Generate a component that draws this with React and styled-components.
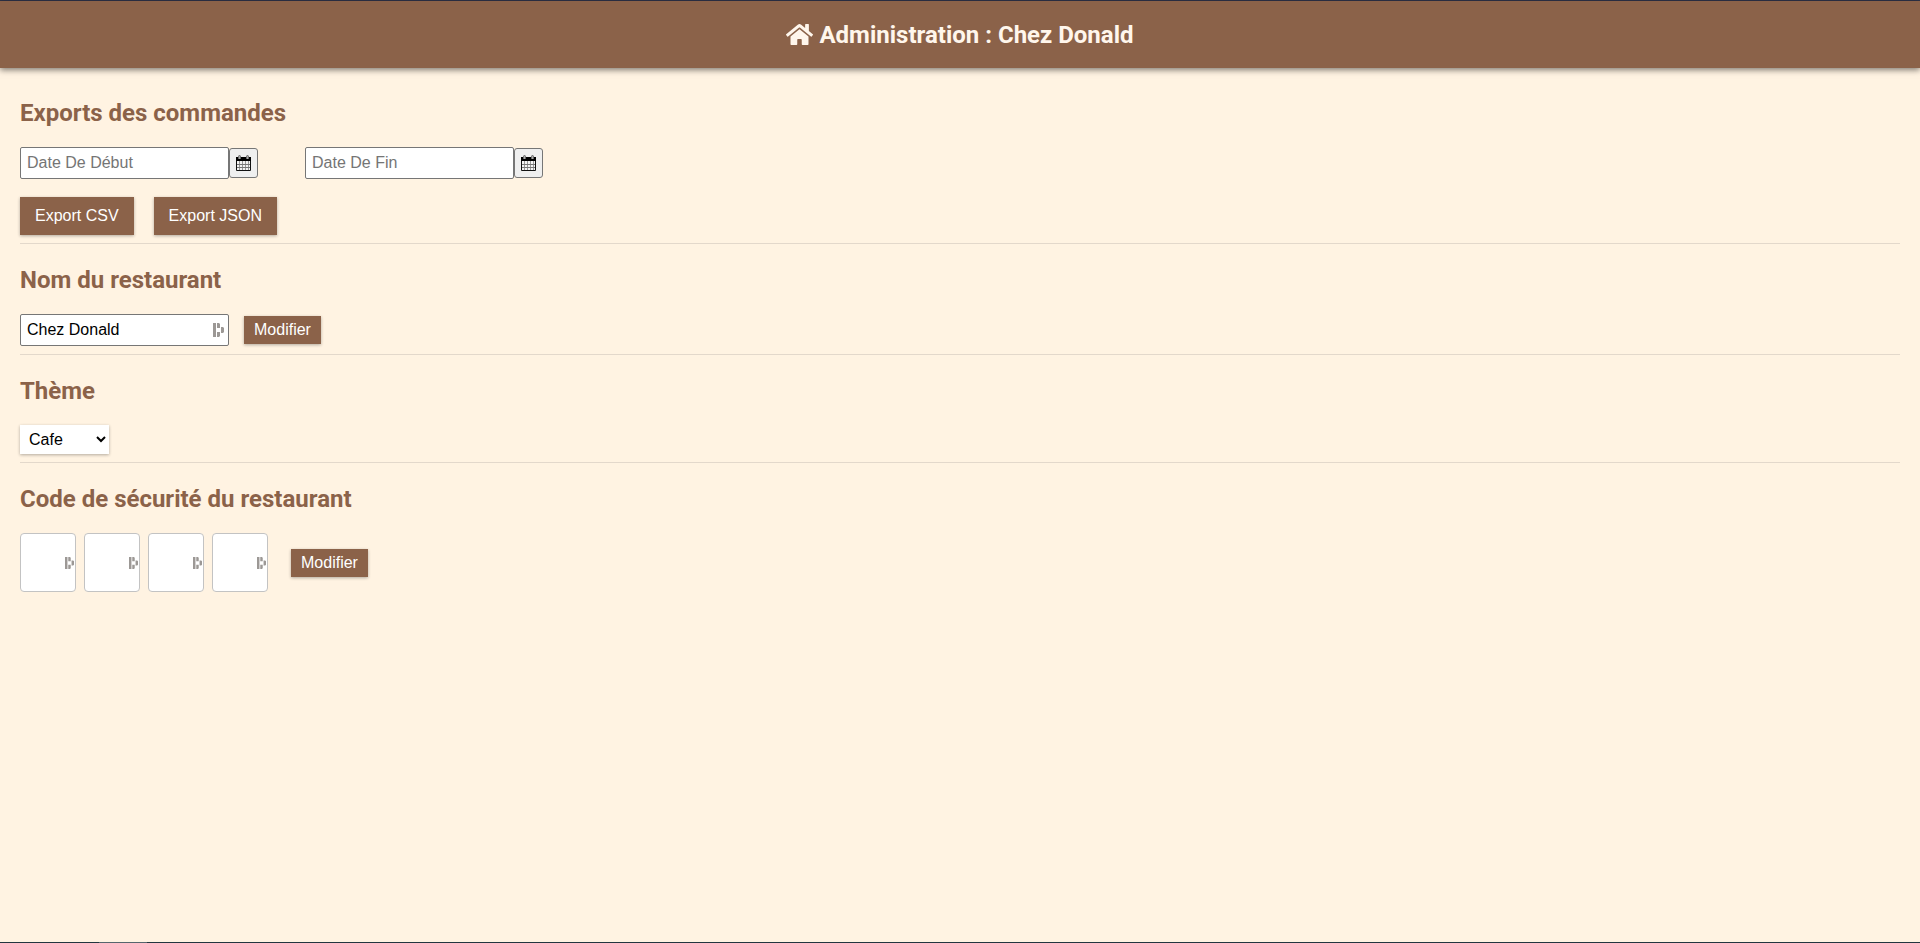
import React from "react";
import styled, { createGlobalStyle } from "styled-components";
import { FaHome } from "react-icons/fa";

const brown = "#8b6249";
const cream = "#fff3e2";

const GlobalStyle = createGlobalStyle`
  *, *::before, *::after { box-sizing: border-box; }
  body { margin: 0; background: ${cream}; }
  button, input, select { font: 16px "Liberation Sans", Arial, sans-serif; margin: 0; }
`;

const Page = styled.div`
  min-height: 100vh;
  display: flex;
  flex-direction: column;
  border-top: 1px solid #2e3248;
  font-family: Roboto, sans-serif;
`;

const Header = styled.header`
  display: flex;
  align-items: center;
  justify-content: center;
  gap: 6px;
  height: 67px;
  background: ${brown};
  color: #fff6ec;
  box-shadow: 0 2px 6px rgba(0, 0, 0, 0.5);
`;

const HomeLink = styled.a`
  display: flex;
  color: inherit;
`;

const Title = styled.h1`
  margin: 0;
  font-size: 24px;
  line-height: 28px;
  font-weight: 700;
`;

const Main = styled.main`
  flex: 1;
  padding: 9px 20px;
`;

const Section = styled.section`
  padding: 22px 0 8px;
  border-bottom: ${(p) => (p.$last ? "none" : "1px solid #e3d8cb")};
`;

const Heading = styled.h2`
  margin: 0 0 20px;
  color: ${brown};
  font-size: 24px;
  line-height: 28px;
  font-weight: 700;
`;

const Row = styled.div`
  display: flex;
  align-items: center;
  gap: ${(p) => p.$gap}px;
  margin-top: ${(p) => p.$top || 0}px;
`;

const TextInput = styled.input`
  width: 209px;
  height: 32px;
  padding: 0 6px;
  border: 1px solid #767676;
  border-radius: 2px;
  background: #fff;
  color: #000;
  &::placeholder { color: #757575; }
`;

const CalendarButton = styled.button`
  display: flex;
  align-items: center;
  justify-content: center;
  width: 29px;
  height: 30px;
  padding: 0;
  border: 1px solid #767676;
  border-radius: 3px;
  background: #efefef;
`;

const Button = styled.button`
  height: ${(p) => (p.$large ? 38 : 28)}px;
  padding: 0 ${(p) => (p.$large ? 15 : 10)}px;
  border: 0;
  background: ${brown};
  color: #fff;
  box-shadow: 0 1px 3px rgba(0, 0, 0, 0.3);
`;

const ThemeSelect = styled.select`
  width: 89px;
  height: 29px;
  padding: 0 5px;
  border: 0;
  background: #fff;
  color: #000;
  box-shadow: 0 1px 3px rgba(0, 0, 0, 0.3);
`;

const Field = styled.div`
  position: relative;
  display: flex;
`;

const FieldMark = styled.svg`
  position: absolute;
  top: 50%;
  right: ${(p) => p.$right}px;
  transform: translateY(-50%);
  pointer-events: none;
`;

const CodeInput = styled.input`
  width: 56px;
  height: 59px;
  padding: 0 8px;
  border: 1px solid #c3c3c3;
  border-radius: 4px;
  background: #fff;
  text-align: center;
`;

const BottomEdge = styled.div`
  height: 1px;
  background: linear-gradient(90deg, #22363f 99px, #56666d 99px 147px, #22363f 147px);
`;

function CalendarIcon() {
  return (
    <svg width="15" height="16" viewBox="0 0 15 16" aria-hidden="true">
      <path d="M0 2h15v14H0z" fill="#f4f4f4" />
      <path d="M3.500 6v9M6.500 6v9M9.500 6v9M12.500 6v9" stroke="#999" />
      <path d="M1 9.500h13M1 12.500h13" stroke="#777" />
      <path d="M.5 2.500h14v13H.5z" fill="none" stroke="#111" />
      <path d="M0 2h15v4H0z" fill="#000" />
      <path d="M2.500 4V1.500a1 1 0 0 1 2 0V4M10.500 4V1.500a1 1 0 0 1 2 0V4" fill="#aaa" stroke="#666" />
    </svg>
  );
}

function PasswordMark({ small }) {
  return (
    <FieldMark
      $right={small ? 2 : 5}
      width={small ? 9 : 11}
      height={small ? 12 : 14}
      viewBox="0 0 11 14"
      preserveAspectRatio="none"
      fill="#9c9895"
      aria-hidden="true"
    >
      <path d="M0 0h3v14H0zM4 0h2l1 1v4H4zM4 9h3v4l-1 1H4zM8 4h2l1 1v4l-1 1H8z" />
    </FieldMark>
  );
}

function DateField({ label }) {
  return (
    <Row $gap={0}>
      <TextInput type="text" placeholder={label} aria-label={label} />
      <CalendarButton type="button" aria-label={`Choisir : ${label}`}>
        <CalendarIcon />
      </CalendarButton>
    </Row>
  );
}

export default function App() {
  return (
    <Page>
      <GlobalStyle />
      <Header>
        <HomeLink href="#" aria-label="Accueil">
          <FaHome size={27} />
        </HomeLink>
        <Title>Administration : Chez Donald</Title>
      </Header>
      <Main>
        <Section>
          <Heading>Exports des commandes</Heading>
          <Row $gap={47}>
            <DateField label="Date De Début" />
            <DateField label="Date De Fin" />
          </Row>
          <Row $gap={20} $top={18}>
            <Button type="button" $large>Export CSV</Button>
            <Button type="button" $large>Export JSON</Button>
          </Row>
        </Section>
        <Section>
          <Heading id="name-title">Nom du restaurant</Heading>
          <Row $gap={15}>
            <Field>
              <TextInput type="text" defaultValue="Chez Donald" aria-labelledby="name-title" />
              <PasswordMark />
            </Field>
            <Button type="button">Modifier</Button>
          </Row>
        </Section>
        <Section>
          <Heading id="theme-title">Thème</Heading>
          <Row $gap={0}>
            <ThemeSelect aria-labelledby="theme-title" defaultValue="Cafe">
              <option>Cafe</option>
            </ThemeSelect>
          </Row>
        </Section>
        <Section $last>
          <Heading>Code de sécurité du restaurant</Heading>
          <Row $gap={23}>
            <Row $gap={8}>
              {[1, 2, 3, 4].map((n) => (
                <Field key={n}>
                  <CodeInput type="password" maxLength={1} aria-label={`Chiffre ${n}`} />
                  <PasswordMark small />
                </Field>
              ))}
            </Row>
            <Button type="button">Modifier</Button>
          </Row>
        </Section>
      </Main>
      <BottomEdge />
    </Page>
  );
}
